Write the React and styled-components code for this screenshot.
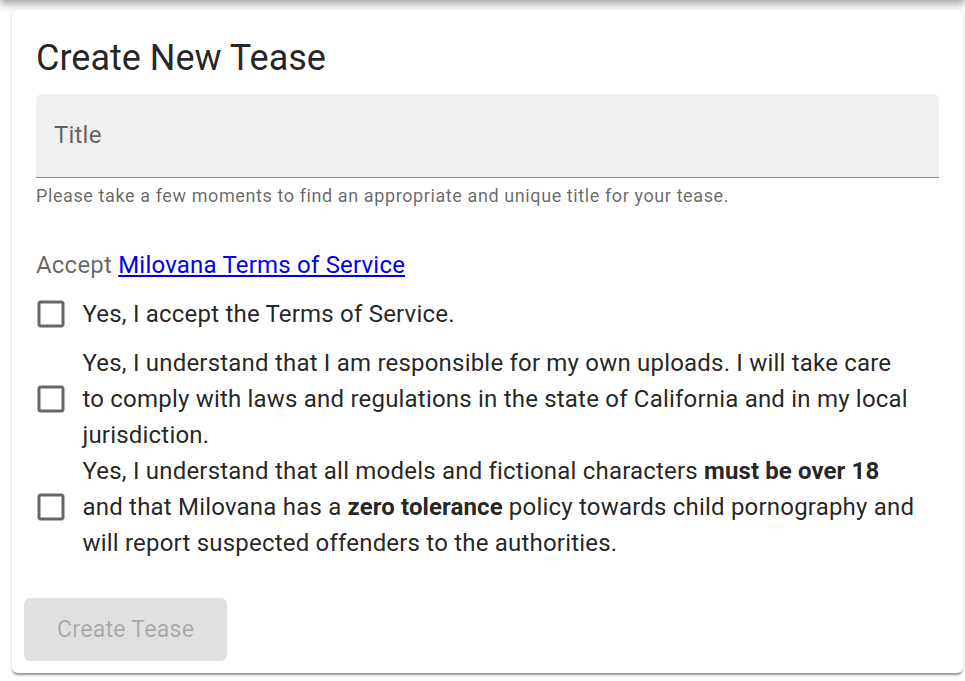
import React from "react";
import styled, { createGlobalStyle } from "styled-components";

const Global = createGlobalStyle`
  html, body { margin: 0; padding: 0; background: #fff; }
  body { font-family: Roboto, "Noto Sans", Arial, sans-serif; color: rgba(0,0,0,0.87); }
  * { box-sizing: border-box; }
`;

const Page = styled.div`
  min-height: 681px;
  display: flex;
  flex-direction: column;
  overflow: hidden;
`;

const AppBarShadow = styled.div`
  height: 20px;
  margin-top: -20px;
  background: #fff;
  box-shadow: 0 3px 6px -1px rgba(0,0,0,0.2), 0 6px 7px 0 rgba(0,0,0,0.14), 0 1px 15px 0 rgba(0,0,0,0.12);
`;

const Card = styled.form`
  margin: 10px 2px 8px 12px;
  background: #fff;
  border-radius: 6px;
  box-shadow: 0 3px 1.5px -1.5px rgba(0,0,0,0.2), 0 1.5px 1.5px 0 rgba(0,0,0,0.14), 0 1.5px 4.5px 0 rgba(0,0,0,0.12);
  display: flex;
  flex-direction: column;
`;

const Content = styled.div`
  padding: 24px;
  display: flex;
  flex-direction: column;
`;

const Heading = styled.h2`
  margin: 0 0 12px;
  font-size: 36px;
  font-weight: 400;
  line-height: 48px;
  color: rgba(0,0,0,0.87);
`;

const Field = styled.div`
  display: flex;
  flex-direction: column;
`;

const FilledBox = styled.label`
  height: 84px;
  background: rgba(0,0,0,0.06);
  border-radius: 6px 6px 0 0;
  border-bottom: 1.5px solid rgba(0,0,0,0.42);
  display: flex;
  align-items: center;
  padding: 0 18px;
`;

const FieldLabel = styled.span`
  font-size: 24px;
  line-height: 34px;
  letter-spacing: 0.2px;
  color: rgba(0,0,0,0.6);
  margin-top: -2px;
`;

const Helper = styled.p`
  margin: 4px 0 0;
  font-size: 18px;
  line-height: 28px;
  letter-spacing: 0.6px;
  color: rgba(0,0,0,0.6);
`;

const Group = styled.fieldset`
  margin: 37px 0 0;
  padding: 0;
  border: 0;
  display: flex;
  flex-direction: column;
`;

const Legend = styled.legend`
  padding: 1px 0 0;
  font-size: 24px;
  line-height: 34px;
  letter-spacing: 0.2px;
  color: rgba(0,0,0,0.6);
`;

const Link = styled.a`
  color: #0000ee;
  text-decoration: underline;
`;

const Row = styled.label`
  display: flex;
  align-items: center;
  margin: 0 20px 0 -16.5px;
  cursor: pointer;
`;

const Box = styled.span`
  flex: 0 0 auto;
  padding: 13.5px;
  display: flex;
  color: rgba(0,0,0,0.6);
  svg { width: 36px; height: 36px; display: block; }
`;

const LabelText = styled.span`
  font-size: 24px;
  line-height: 36px;
  letter-spacing: 0.2px;
  color: rgba(0,0,0,0.87);
  b { font-weight: 700; letter-spacing: 0.1px; }
`;

const Actions = styled.div`
  padding: 13px 12px 12px;
  display: flex;
`;

const Button = styled.button`
  font-family: Roboto, "Noto Sans", Arial, sans-serif;
  font-size: 23px;
  font-weight: 400;
  line-height: 39px;
  letter-spacing: 0.3px;
  padding: 12px 33px;
  border: 0;
  border-radius: 6px;
  background: rgba(0,0,0,0.12);
  color: rgba(0,0,0,0.26);
  cursor: default;
`;

const CheckIcon = () => (
  <svg viewBox="0 0 24 24" fill="currentColor" aria-hidden="true">
    <path d="M19 5v14H5V5h14m0-2H5c-1.11 0-2 .9-2 2v14c0 1.1.89 2 2 2h14c1.1 0 2-.9 2-2V5c0-1.1-.9-2-2-2z" />
  </svg>
);

const Check = ({ children }) => (
  <Row>
    <Box><CheckIcon /></Box>
    <LabelText>{children}</LabelText>
  </Row>
);

export default function App() {
  return (
    <Page>
      <Global />
      <AppBarShadow />
      <Card onSubmit={(e) => e.preventDefault()}>
        <Content>
          <Heading>Create New Tease</Heading>
          <Field>
            <FilledBox>
              <FieldLabel>Title</FieldLabel>
            </FilledBox>
            <Helper>Please take a few moments to find an appropriate and unique title for your tease.</Helper>
          </Field>
          <Group>
            <Legend>
              Accept <Link href="#">Milovana Terms of Service</Link>
            </Legend>
            <Check>Yes, I accept the Terms of Service.</Check>
            <Check>
              Yes, I understand that I am responsible for my own uploads. I will take care to comply with laws and regulations in the state of California and in my local jurisdiction.
            </Check>
            <Check>
              Yes, I understand that all models and fictional characters <b>must be over 18</b> and that Milovana has a <b>zero tolerance</b> policy towards child pornography and will report suspected offenders to the authorities.
            </Check>
          </Group>
        </Content>
        <Actions>
          <Button type="button" disabled>Create Tease</Button>
        </Actions>
      </Card>
    </Page>
  );
}
